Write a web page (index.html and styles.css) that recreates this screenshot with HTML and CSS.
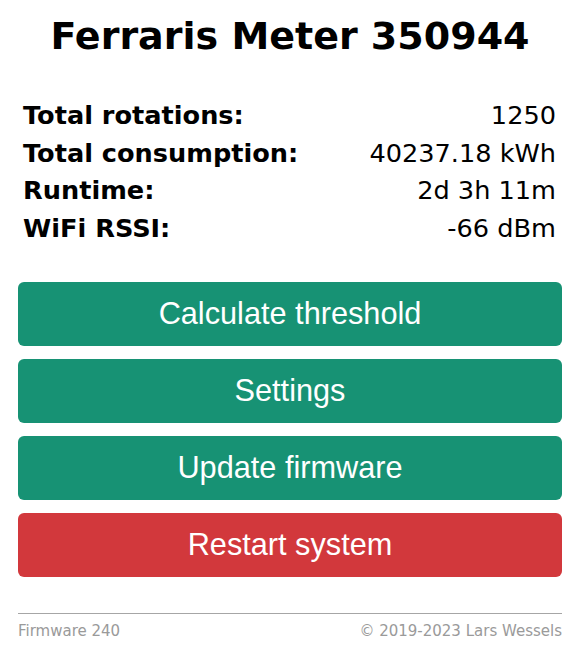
FILE: index.html
```html
<!DOCTYPE html>
<html>
<head>
<meta charset="utf-8">
<link rel="stylesheet" href="styles.css">
</head>
<body>
<div class="page">
  <h1 class="title">Ferraris Meter 350944</h1>
  <table class="stats">
    <tr><th>Total rotations:</th><td>1250</td></tr>
    <tr><th>Total consumption:</th><td>40237.18 kWh</td></tr>
    <tr><th>Runtime:</th><td>2d 3h 11m</td></tr>
    <tr><th>WiFi RSSI:</th><td>-66 dBm</td></tr>
  </table>
  <div class="actions">
    <a class="btn">Calculate threshold</a>
    <a class="btn">Settings</a>
    <a class="btn">Update firmware</a>
    <a class="btn btn-danger">Restart system</a>
  </div>
  <div class="footer">
    <span>Firmware 240</span>
    <span>© 2019-2023 Lars Wessels</span>
  </div>
</div>
</body>
</html>
```
FILE: styles.css
```css
html, body {
  margin: 0;
  padding: 0;
  background: #fff;
}
.page {
  padding: 0 12px 0 18px;
  width: 544px;
  font-family: "DejaVu Sans", Verdana, sans-serif;
  color: #000;
}
.title {
  margin: 0;
  padding-top: 13px;
  font-size: 38px;
  font-weight: bold;
  text-align: center;
  line-height: 46px;
}
.stats {
  width: 100%;
  border-collapse: collapse;
  margin-top: 38px;
  font-size: 25.6px;
}
.stats th, .stats td {
  padding: 3px 6px 4px 5px;
  line-height: 30.5px;
}
.stats th {
  text-align: left;
  font-weight: bold;
}
.stats td {
  text-align: right;
}
.actions {
  margin-top: 35px;
  display: flex;
  flex-direction: column;
  gap: 13px;
}
.btn {
  display: flex;
  align-items: center;
  justify-content: center;
  height: 64px;
  border-radius: 6px;
  background: #179274;
  color: #fff;
  font-family: "Liberation Sans", Arial, sans-serif;
  font-size: 30.7px;
}
.btn-danger {
  background: #d2383c;
}
.footer {
  margin-top: 36px;
  border-top: 1px solid #a6a6a6;
  display: flex;
  justify-content: space-between;
  padding-top: 8px;
  font-size: 15px;
  color: #9a9a9a;
}
```
